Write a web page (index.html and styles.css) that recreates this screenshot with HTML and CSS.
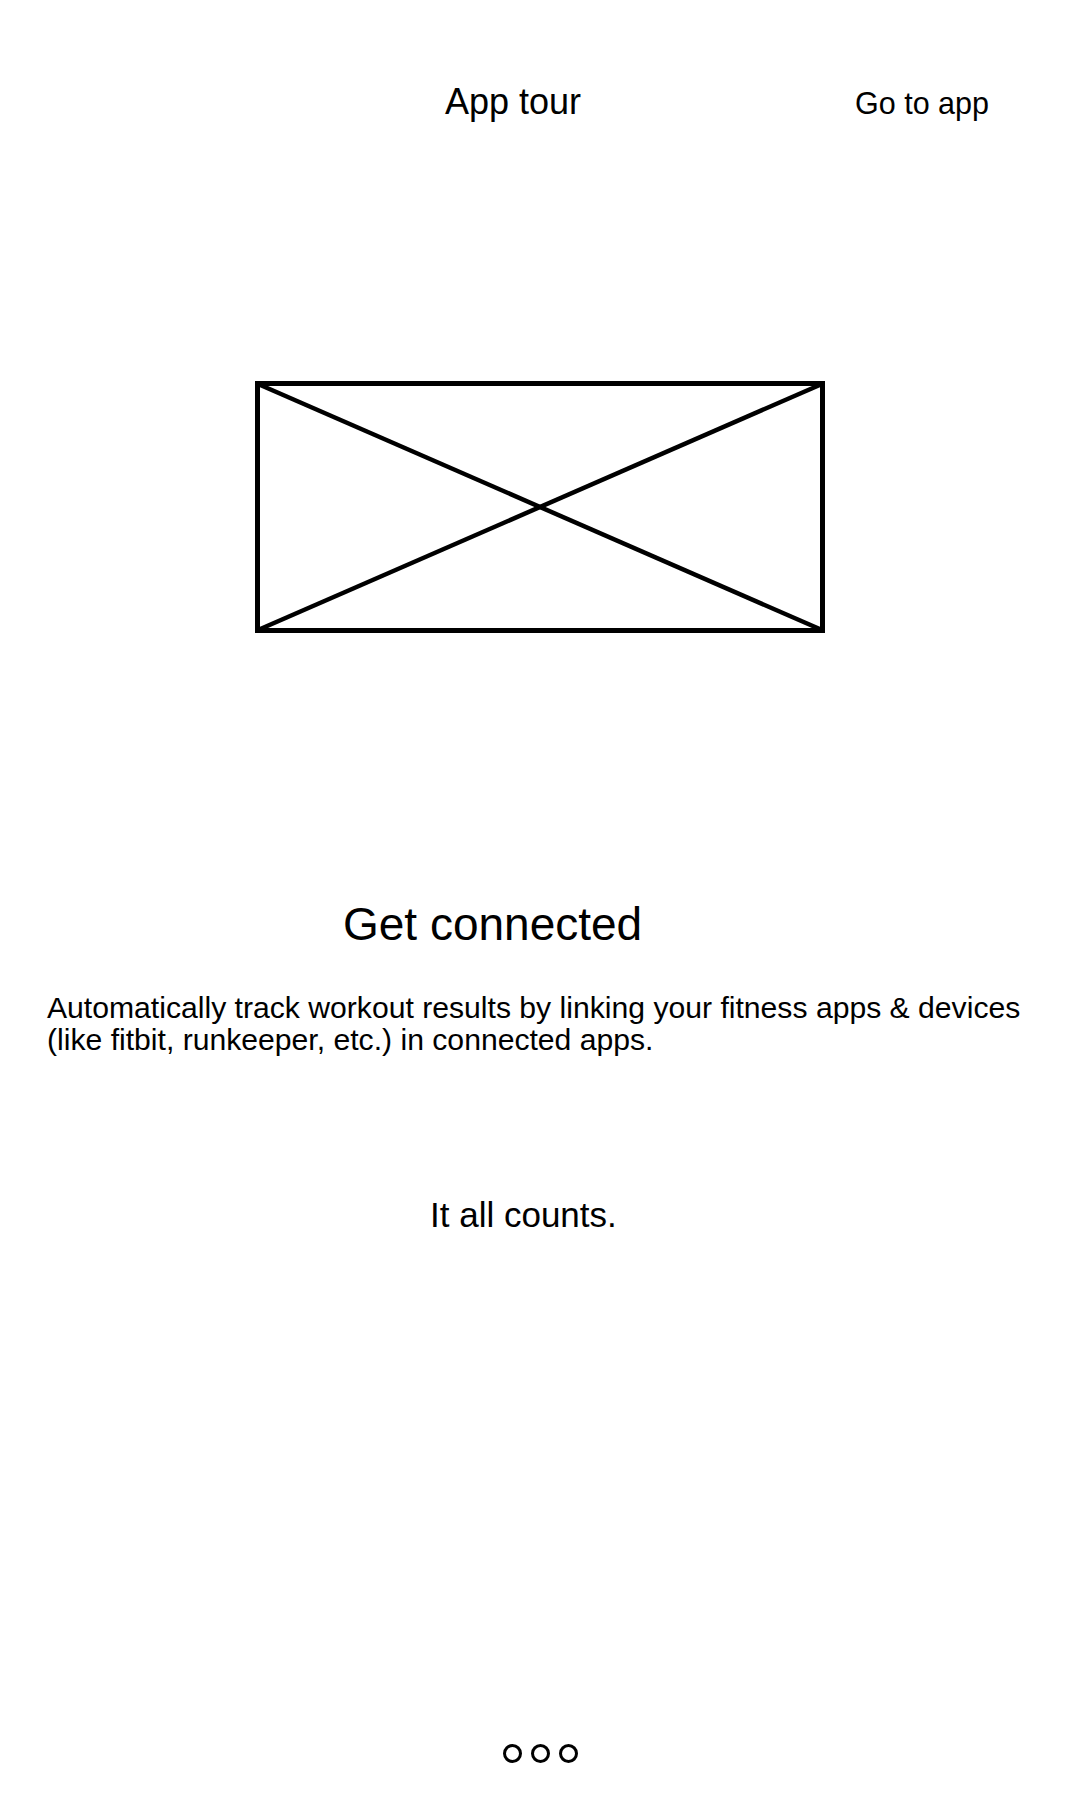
FILE: index.html
```html
<!DOCTYPE html>
<html lang="en">
<head>
<meta charset="utf-8">
<title>App tour</title>
<link rel="stylesheet" href="styles.css">
</head>
<body>
<div class="screen">
  <header class="header">
    <h1 class="title">App tour</h1>
    <a class="skip" href="#">Go to app</a>
  </header>
  <div class="hero">
    <svg class="placeholder" width="570" height="252" viewBox="0 0 570 252" aria-hidden="true">
      <rect x="2.5" y="2.5" width="565" height="247" fill="none" stroke="#000" stroke-width="5"/>
      <line x1="3" y1="3" x2="567" y2="249" stroke="#000" stroke-width="4.5"/>
      <line x1="567" y1="3" x2="3" y2="249" stroke="#000" stroke-width="4.5"/>
    </svg>
  </div>
  <h2 class="heading">Get connected</h2>
  <p class="desc">Automatically track workout results by linking your fitness apps &amp; devices (like fitbit, runkeeper, etc.) in connected apps.</p>
  <p class="tagline">It all counts.</p>
  <div class="dots">
    <span class="dot"></span>
    <span class="dot"></span>
    <span class="dot"></span>
  </div>
</div>
</body>
</html>
```
FILE: styles.css
```css
html, body {
  margin: 0;
  padding: 0;
  background: #fff;
}
body {
  font-family: "Liberation Sans", Arial, sans-serif;
  color: #000;
}
.screen {
  width: 1080px;
  height: 1800px;
  display: flex;
  flex-direction: column;
}
.header {
  display: flex;
  align-items: baseline;
  padding: 84px 91px 0 445px;
}
.title {
  margin: 0;
  font-size: 36px;
  font-weight: normal;
  line-height: 1;
}
.skip {
  margin-left: auto;
  font-size: 30.5px;
  line-height: 1;
  color: #000;
  text-decoration: none;
}
.hero {
  margin-top: 261px;
  display: flex;
  justify-content: center;
}
.placeholder {
  display: block;
}
.heading {
  margin: 268px 0 0;
  padding-left: 343px;
  font-size: 46px;
  font-weight: normal;
  line-height: 1;
}
.desc {
  margin: 45px 0 0;
  padding: 0 40px 0 47px;
  font-size: 30.15px;
  line-height: 32px;
}
.tagline {
  margin: 141px 0 0;
  padding-left: 430px;
  font-size: 35px;
  line-height: 1;
}
.dots {
  margin-top: 512px;
  display: flex;
  justify-content: center;
  gap: 9px;
}
.dot {
  width: 13px;
  height: 13px;
  border: 3px solid #000;
  border-radius: 50%;
}
```
